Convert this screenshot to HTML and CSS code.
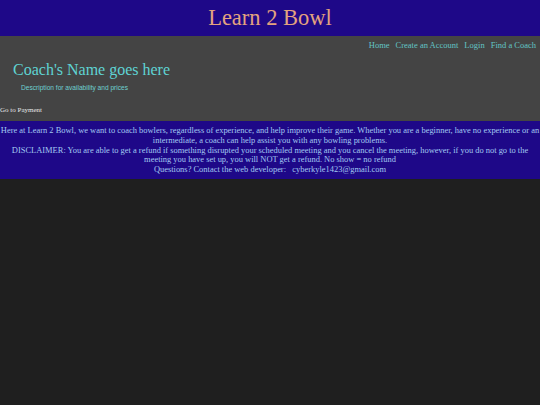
FILE: index.html
```html
<!DOCTYPE html>
<html>
<head>
<meta charset="utf-8">
<link rel="stylesheet" href="styles.css">
</head>
<body>
<header class="top">
  <h1 class="brand">Learn 2 Bowl</h1>
</header>
<section class="main">
  <nav class="nav">
    <a href="#">Home</a>
    <a href="#">Create an Account</a>
    <a href="#">Login</a>
    <a href="#">Find a Coach</a>
  </nav>
  <div class="coach">
    <h2 class="coach-name">Coach's Name goes here</h2>
    <p class="coach-desc">Description for availability and prices</p>
  </div>
  <a class="pay" href="#">Go to Payment</a>
</section>
<footer class="info">
  <p>Here at Learn 2 Bowl, we want to coach bowlers, regardless of experience, and help improve their game. Whether you are a beginner, have no experience or an intermediate, a coach can help assist you with any bowling problems.<br>DISCLAIMER: You are able to get a refund if something disrupted your scheduled meeting and you cancel the meeting, however, if you do not go to the meeting you have set up, you will NOT get a refund. No show = no refund<br>Questions? Contact the web developer: &nbsp; cyberkyle1423@gmail.com</p>
</footer>
</body>
</html>
```
FILE: styles.css
```css
html, body {
  margin: 0;
  padding: 0;
  background: #1f1f1f;
  height: 100%;
}
body {
  font-family: "Liberation Serif", serif;
}
.top {
  background: #1e0888;
  height: 36px;
  display: flex;
  align-items: center;
  justify-content: center;
}
.brand {
  margin: 0;
  font-family: "Liberation Serif", serif;
  font-weight: normal;
  font-size: 22.5px;
  line-height: 26px;
  color: #e3a37f;
}
.main {
  background: #444444;
  height: 85px;
  display: flex;
  flex-direction: column;
}
.nav {
  display: flex;
  justify-content: flex-end;
  gap: 6px;
  padding: 4px 4px 0 0;
  font-size: 8.5px;
  line-height: 11px;
}
.nav a {
  color: #63c4c4;
  text-decoration: none;
}
.coach {
  padding: 9px 0 0 13px;
}
.coach-name {
  margin: 0;
  font-family: "Liberation Serif", serif;
  font-weight: normal;
  font-size: 16px;
  line-height: 20px;
  color: #5fd3d3;
}
.coach-desc {
  margin: 3px 0 0 8px;
  font-family: "Liberation Sans", sans-serif;
  font-size: 6.6px;
  line-height: 9px;
  color: #6fd0d0;
}
.pay {
  margin-top: 14px;
  font-size: 7px;
  line-height: 9px;
  color: #e8e8e8;
  text-decoration: none;
}
.info {
  background: #1e0888;
  padding: 5px 0 4px;
}
.info p {
  margin: 0;
  text-align: center;
  font-size: 8.45px;
  line-height: 9.8px;
  color: #a3c9f2;
}
```
